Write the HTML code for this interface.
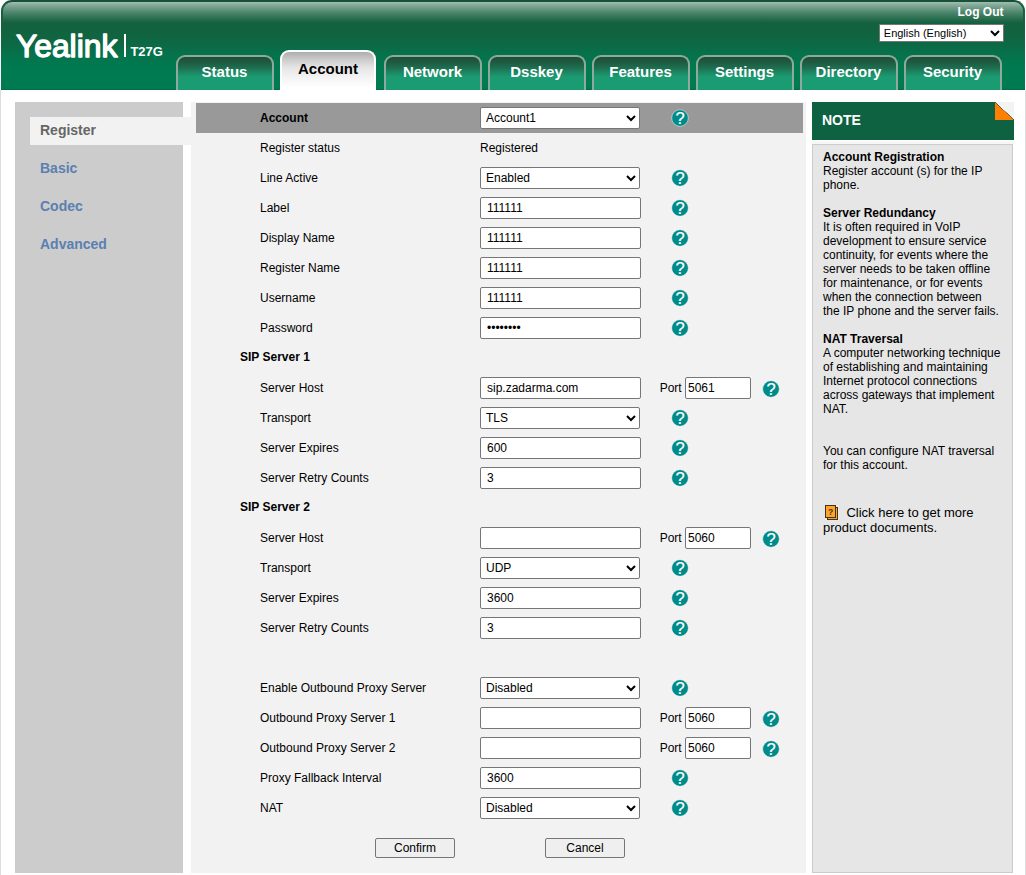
<!DOCTYPE html>
<html>
<head>
<meta charset="utf-8">
<title>Yealink T27G</title>
<style>
*{box-sizing:border-box;}
html,body{margin:0;padding:0;background:#fff;}
body{width:1026px;height:875px;position:relative;overflow:hidden;font-family:"Liberation Sans",sans-serif;font-size:12px;color:#000;}
#wrap{position:absolute;left:0;top:90px;width:1026px;height:785px;border-left:1px solid #dcdcdc;border-right:1px solid #dcdcdc;}
#hdr{position:absolute;left:1px;top:0;width:1024px;height:90px;border-radius:11px 11px 0 0;overflow:hidden;
 background:linear-gradient(to bottom,#1a4e37 0,#1a5039 2px,#18603f 3px,#15613f 22px,#12633f 32px,#0e6743 42px,#06714b 53px,#01784f 63px,#007a50 70px,#007a50 89px,#006f48 89px,#006f48 90px);}
#hl{position:absolute;left:2px;right:2px;top:2px;height:21px;border-radius:9px 9px 0 0;background:linear-gradient(to bottom,rgba(255,255,255,.6) 0,rgba(255,255,255,.47) 3px,rgba(255,255,255,.34) 7px,rgba(255,255,255,.22) 11px,rgba(255,255,255,.12) 15px,rgba(255,255,255,.03) 19px,rgba(255,255,255,0) 21px);}
#logo{position:absolute;left:13px;top:29px;}
#sep{position:absolute;left:123px;top:34px;width:2px;height:23px;background:#fff;}
#model{position:absolute;left:129.4px;top:44px;color:#fff;font-weight:bold;font-size:13px;line-height:16px;}
#logout{position:absolute;right:21.5px;top:4px;color:#fff;font-weight:bold;font-size:12px;line-height:16px;}
#lang{position:absolute;left:877.8px;top:24px;width:125px;height:18px;font-size:11px;font-family:"Liberation Sans",sans-serif;margin:0;color:#000;background:#fff;border:1px solid #767676;border-radius:0;}
.tab{position:absolute;top:55px;height:35px;width:98px;border:2px solid #8fa99c;border-bottom:none;border-radius:9px 9px 0 0;
 background:linear-gradient(to bottom,#1d4f38 0,#1e5a40 5px,#1e6f51 11px,#1c8a66 16px,#1b9b72 20px,#1b9b72 100%);
 color:#fff;font-weight:bold;font-size:15px;text-align:center;line-height:30px;text-indent:-1px;}
.tab.on{top:50px;height:40px;width:96px;border:2px solid #fff;border-bottom:none;background:linear-gradient(to bottom,#adadad 0,#cdcdcd 8px,#e6e6e6 16px,#f4f4f4 26px,#fff 36px);color:#000;line-height:34px;text-indent:0;}
#side{position:absolute;left:15px;top:102px;width:168px;height:771px;background:#ccc;}
#side .cur{position:absolute;left:15px;top:15px;width:161px;height:28px;background:#f2f2f2;color:#666;font-weight:bold;font-size:14px;line-height:26px;padding-left:10px;}
#side a{position:absolute;left:25px;color:#5b7fb0;font-weight:bold;font-size:14px;line-height:18px;text-decoration:none;}
#main{position:absolute;left:191px;top:102px;width:615px;height:771px;background:#f2f2f2;}
#bar{position:absolute;left:5px;top:1px;width:607px;height:30px;background:#999;}
.r{position:absolute;left:0;width:615px;height:30px;line-height:30px;}
.r .l{position:absolute;left:69px;top:0;white-space:nowrap;}
.r .h{position:absolute;left:49px;top:-1px;font-weight:bold;white-space:nowrap;}
.r .v{position:absolute;left:289px;top:0;}
.r input.t,.r select.s{position:absolute;left:289px;top:4px;height:22px;font-family:"Liberation Sans",sans-serif;font-size:12px;margin:0;color:#000;background:#fff;border:1px solid #767676;border-radius:2px;}
.r input.t{width:161px;padding:1px 6px;}
.r select.s{width:160px;padding:0 0 0 1px;}
.r .pl{position:absolute;left:468.7px;top:0;}
.r input.p{position:absolute;left:494px;top:4px;width:66px;height:22px;font-family:"Liberation Sans",sans-serif;font-size:12px;margin:0;padding:1px 2px;border:1px solid #767676;border-radius:2px;background:#fff;color:#000;}
.q{position:absolute;left:480px;top:6px;}
.q.p2{left:571px;top:7px;}
.btn{position:absolute;top:736px;width:80px;height:20px;font-family:"Liberation Sans",sans-serif;font-size:12px;border:1px solid #767676;border-radius:2px;background:#efefef;color:#000;padding:0;margin:0;}
#nh{position:absolute;left:812px;top:102px;width:202px;height:38px;background:#0e6241;color:#fff;font-weight:bold;font-size:14px;line-height:36px;padding-left:10px;}
#fold{position:absolute;left:995px;top:102px;width:19px;height:18px;background:linear-gradient(to top right,#ff7f00 0,#ff7f00 48.5%,#5a5a3a 49%,#5a6a4a 51%,#f3f3f3 51.5%,#f3f3f3 100%);}
#nb{position:absolute;left:812px;top:144px;width:201px;height:729px;background:#e6e6e6;border:1px solid #ccc;padding:5px 11px 0 10px;line-height:14px;font-size:12px;}
#nb b{display:block;}
#nb .more{font-size:13px;line-height:15px;margin-top:5px;}
</style>
</head>
<body>
<div id="wrap"></div>
<div id="hdr">
 <div id="hl"></div>
 <svg id="logo" width="112" height="34" viewBox="0 0 112 34"><text x="1.9" y="27.7" font-family="Liberation Sans, sans-serif" font-size="31.8" fill="#fff" stroke="#fff" stroke-width="1.35" stroke-linejoin="round" textLength="101.5" lengthAdjust="spacingAndGlyphs">Yealink</text></svg><div id="sep"></div><div id="model">T27G</div>
 <div id="logout">Log Out</div>
 <select id="lang"><option>English (English)</option></select>
</div>
<div class="tab" style="left:176px">Status</div>
<div class="tab on" style="left:280px">Account</div>
<div class="tab" style="left:384px">Network</div>
<div class="tab" style="left:488px">Dsskey</div>
<div class="tab" style="left:592px">Features</div>
<div class="tab" style="left:696px">Settings</div>
<div class="tab" style="left:800px">Directory</div>
<div class="tab" style="left:904px">Security</div>

<div id="side">
 <div class="cur">Register</div>
 <a style="top:57px">Basic</a>
 <a style="top:95px">Codec</a>
 <a style="top:133px">Advanced</a>
</div>

<div id="main">
 <div id="bar"></div>
 <div class="r" style="top:1px"><span class="l" style="font-weight:bold">Account</span><select class="s"><option>Account1</option></select><svg class="q" width="18" height="18" viewBox="0 0 18 18"><circle cx="9" cy="9" r="8.3" fill="#008b8b" stroke="#fbf4f4" stroke-width="0.5"/><text x="9" y="14.8" font-family="Liberation Sans, sans-serif" font-size="16.5" text-anchor="middle" fill="#fff" stroke="#fff" stroke-width="0.2">?</text></svg></div>
 <div class="r" style="top:31px"><span class="l">Register status</span><span class="v">Registered</span></div>
 <div class="r" style="top:61px"><span class="l">Line Active</span><select class="s"><option>Enabled</option></select><svg class="q" width="18" height="18" viewBox="0 0 18 18"><circle cx="9" cy="9" r="8.3" fill="#008b8b" stroke="#fbf4f4" stroke-width="0.5"/><text x="9" y="14.8" font-family="Liberation Sans, sans-serif" font-size="16.5" text-anchor="middle" fill="#fff" stroke="#fff" stroke-width="0.2">?</text></svg></div>
 <div class="r" style="top:91px"><span class="l">Label</span><input class="t" value="111111"><svg class="q" width="18" height="18" viewBox="0 0 18 18"><circle cx="9" cy="9" r="8.3" fill="#008b8b" stroke="#fbf4f4" stroke-width="0.5"/><text x="9" y="14.8" font-family="Liberation Sans, sans-serif" font-size="16.5" text-anchor="middle" fill="#fff" stroke="#fff" stroke-width="0.2">?</text></svg></div>
 <div class="r" style="top:121px"><span class="l">Display Name</span><input class="t" value="111111"><svg class="q" width="18" height="18" viewBox="0 0 18 18"><circle cx="9" cy="9" r="8.3" fill="#008b8b" stroke="#fbf4f4" stroke-width="0.5"/><text x="9" y="14.8" font-family="Liberation Sans, sans-serif" font-size="16.5" text-anchor="middle" fill="#fff" stroke="#fff" stroke-width="0.2">?</text></svg></div>
 <div class="r" style="top:151px"><span class="l">Register Name</span><input class="t" value="111111"><svg class="q" width="18" height="18" viewBox="0 0 18 18"><circle cx="9" cy="9" r="8.3" fill="#008b8b" stroke="#fbf4f4" stroke-width="0.5"/><text x="9" y="14.8" font-family="Liberation Sans, sans-serif" font-size="16.5" text-anchor="middle" fill="#fff" stroke="#fff" stroke-width="0.2">?</text></svg></div>
 <div class="r" style="top:181px"><span class="l">Username</span><input class="t" value="111111"><svg class="q" width="18" height="18" viewBox="0 0 18 18"><circle cx="9" cy="9" r="8.3" fill="#008b8b" stroke="#fbf4f4" stroke-width="0.5"/><text x="9" y="14.8" font-family="Liberation Sans, sans-serif" font-size="16.5" text-anchor="middle" fill="#fff" stroke="#fff" stroke-width="0.2">?</text></svg></div>
 <div class="r" style="top:211px"><span class="l">Password</span><input class="t" type="password" value="12345678"><svg class="q" width="18" height="18" viewBox="0 0 18 18"><circle cx="9" cy="9" r="8.3" fill="#008b8b" stroke="#fbf4f4" stroke-width="0.5"/><text x="9" y="14.8" font-family="Liberation Sans, sans-serif" font-size="16.5" text-anchor="middle" fill="#fff" stroke="#fff" stroke-width="0.2">?</text></svg></div>
 <div class="r" style="top:241px"><span class="h">SIP Server 1</span></div>
 <div class="r" style="top:271px"><span class="l">Server Host</span><input class="t" value="sip.zadarma.com"><span class="pl">Port</span><input class="p" value="5061"><svg class="q p2" width="18" height="18" viewBox="0 0 18 18"><circle cx="9" cy="9" r="8.3" fill="#008b8b" stroke="#fbf4f4" stroke-width="0.5"/><text x="9" y="14.8" font-family="Liberation Sans, sans-serif" font-size="16.5" text-anchor="middle" fill="#fff" stroke="#fff" stroke-width="0.2">?</text></svg></div>
 <div class="r" style="top:301px"><span class="l">Transport</span><select class="s"><option>TLS</option></select><svg class="q" width="18" height="18" viewBox="0 0 18 18"><circle cx="9" cy="9" r="8.3" fill="#008b8b" stroke="#fbf4f4" stroke-width="0.5"/><text x="9" y="14.8" font-family="Liberation Sans, sans-serif" font-size="16.5" text-anchor="middle" fill="#fff" stroke="#fff" stroke-width="0.2">?</text></svg></div>
 <div class="r" style="top:331px"><span class="l">Server Expires</span><input class="t" value="600"><svg class="q" width="18" height="18" viewBox="0 0 18 18"><circle cx="9" cy="9" r="8.3" fill="#008b8b" stroke="#fbf4f4" stroke-width="0.5"/><text x="9" y="14.8" font-family="Liberation Sans, sans-serif" font-size="16.5" text-anchor="middle" fill="#fff" stroke="#fff" stroke-width="0.2">?</text></svg></div>
 <div class="r" style="top:361px"><span class="l">Server Retry Counts</span><input class="t" value="3"><svg class="q" width="18" height="18" viewBox="0 0 18 18"><circle cx="9" cy="9" r="8.3" fill="#008b8b" stroke="#fbf4f4" stroke-width="0.5"/><text x="9" y="14.8" font-family="Liberation Sans, sans-serif" font-size="16.5" text-anchor="middle" fill="#fff" stroke="#fff" stroke-width="0.2">?</text></svg></div>
 <div class="r" style="top:391px"><span class="h">SIP Server 2</span></div>
 <div class="r" style="top:421px"><span class="l">Server Host</span><input class="t" value=""><span class="pl">Port</span><input class="p" value="5060"><svg class="q p2" width="18" height="18" viewBox="0 0 18 18"><circle cx="9" cy="9" r="8.3" fill="#008b8b" stroke="#fbf4f4" stroke-width="0.5"/><text x="9" y="14.8" font-family="Liberation Sans, sans-serif" font-size="16.5" text-anchor="middle" fill="#fff" stroke="#fff" stroke-width="0.2">?</text></svg></div>
 <div class="r" style="top:451px"><span class="l">Transport</span><select class="s"><option>UDP</option></select><svg class="q" width="18" height="18" viewBox="0 0 18 18"><circle cx="9" cy="9" r="8.3" fill="#008b8b" stroke="#fbf4f4" stroke-width="0.5"/><text x="9" y="14.8" font-family="Liberation Sans, sans-serif" font-size="16.5" text-anchor="middle" fill="#fff" stroke="#fff" stroke-width="0.2">?</text></svg></div>
 <div class="r" style="top:481px"><span class="l">Server Expires</span><input class="t" value="3600"><svg class="q" width="18" height="18" viewBox="0 0 18 18"><circle cx="9" cy="9" r="8.3" fill="#008b8b" stroke="#fbf4f4" stroke-width="0.5"/><text x="9" y="14.8" font-family="Liberation Sans, sans-serif" font-size="16.5" text-anchor="middle" fill="#fff" stroke="#fff" stroke-width="0.2">?</text></svg></div>
 <div class="r" style="top:511px"><span class="l">Server Retry Counts</span><input class="t" value="3"><svg class="q" width="18" height="18" viewBox="0 0 18 18"><circle cx="9" cy="9" r="8.3" fill="#008b8b" stroke="#fbf4f4" stroke-width="0.5"/><text x="9" y="14.8" font-family="Liberation Sans, sans-serif" font-size="16.5" text-anchor="middle" fill="#fff" stroke="#fff" stroke-width="0.2">?</text></svg></div>
 <div class="r" style="top:571px"><span class="l">Enable Outbound Proxy Server</span><select class="s"><option>Disabled</option></select><svg class="q" width="18" height="18" viewBox="0 0 18 18"><circle cx="9" cy="9" r="8.3" fill="#008b8b" stroke="#fbf4f4" stroke-width="0.5"/><text x="9" y="14.8" font-family="Liberation Sans, sans-serif" font-size="16.5" text-anchor="middle" fill="#fff" stroke="#fff" stroke-width="0.2">?</text></svg></div>
 <div class="r" style="top:601px"><span class="l">Outbound Proxy Server 1</span><input class="t" value=""><span class="pl">Port</span><input class="p" value="5060"><svg class="q p2" width="18" height="18" viewBox="0 0 18 18"><circle cx="9" cy="9" r="8.3" fill="#008b8b" stroke="#fbf4f4" stroke-width="0.5"/><text x="9" y="14.8" font-family="Liberation Sans, sans-serif" font-size="16.5" text-anchor="middle" fill="#fff" stroke="#fff" stroke-width="0.2">?</text></svg></div>
 <div class="r" style="top:631px"><span class="l">Outbound Proxy Server 2</span><input class="t" value=""><span class="pl">Port</span><input class="p" value="5060"><svg class="q p2" width="18" height="18" viewBox="0 0 18 18"><circle cx="9" cy="9" r="8.3" fill="#008b8b" stroke="#fbf4f4" stroke-width="0.5"/><text x="9" y="14.8" font-family="Liberation Sans, sans-serif" font-size="16.5" text-anchor="middle" fill="#fff" stroke="#fff" stroke-width="0.2">?</text></svg></div>
 <div class="r" style="top:661px"><span class="l">Proxy Fallback Interval</span><input class="t" value="3600"><svg class="q" width="18" height="18" viewBox="0 0 18 18"><circle cx="9" cy="9" r="8.3" fill="#008b8b" stroke="#fbf4f4" stroke-width="0.5"/><text x="9" y="14.8" font-family="Liberation Sans, sans-serif" font-size="16.5" text-anchor="middle" fill="#fff" stroke="#fff" stroke-width="0.2">?</text></svg></div>
 <div class="r" style="top:691px"><span class="l">NAT</span><select class="s"><option>Disabled</option></select><svg class="q" width="18" height="18" viewBox="0 0 18 18"><circle cx="9" cy="9" r="8.3" fill="#008b8b" stroke="#fbf4f4" stroke-width="0.5"/><text x="9" y="14.8" font-family="Liberation Sans, sans-serif" font-size="16.5" text-anchor="middle" fill="#fff" stroke="#fff" stroke-width="0.2">?</text></svg></div>
 <button class="btn" style="left:184px">Confirm</button>
 <button class="btn" style="left:354px">Cancel</button>
</div>

<div style="position:absolute;left:812px;top:141px;width:202px;height:3px;background:#f7f7f7"></div>
<div id="nh">NOTE</div>
<div id="fold"></div>
<div id="nb">
 <b>Account Registration</b>Register account (s) for the IP phone.<br><br>
 <b>Server Redundancy</b>It is often required in VoIP development to ensure service continuity, for events where the server needs to be taken offline for maintenance, or for events when the connection between the IP phone and the server fails.<br><br>
 <b>NAT Traversal</b>A computer networking technique of establishing and maintaining Internet protocol connections across gateways that implement NAT.<br><br><br>
 You can configure NAT traversal for this account.<br><br><br>
 <div class="more"><svg width="14" height="15" viewBox="0 0 14 15" style="vertical-align:top;margin:0 7.4px 0 2px"><rect x="-0.6" y="-0.6" width="14.6" height="15.8" fill="#f4f0ea" opacity="0.6"/><rect x="2.5" y="2.5" width="10" height="12" fill="#ffa526" stroke="#3d3226" stroke-width="1"/><rect x="0.5" y="0.5" width="10" height="12" fill="#ffa526" stroke="#3d3226" stroke-width="1"/><text x="5.6" y="10" font-size="8.5" font-weight="bold" text-anchor="middle" fill="#3d3226" font-family="Liberation Sans, sans-serif">?</text></svg>Click here to get more product documents.</div>
</div>
</body>
</html>
